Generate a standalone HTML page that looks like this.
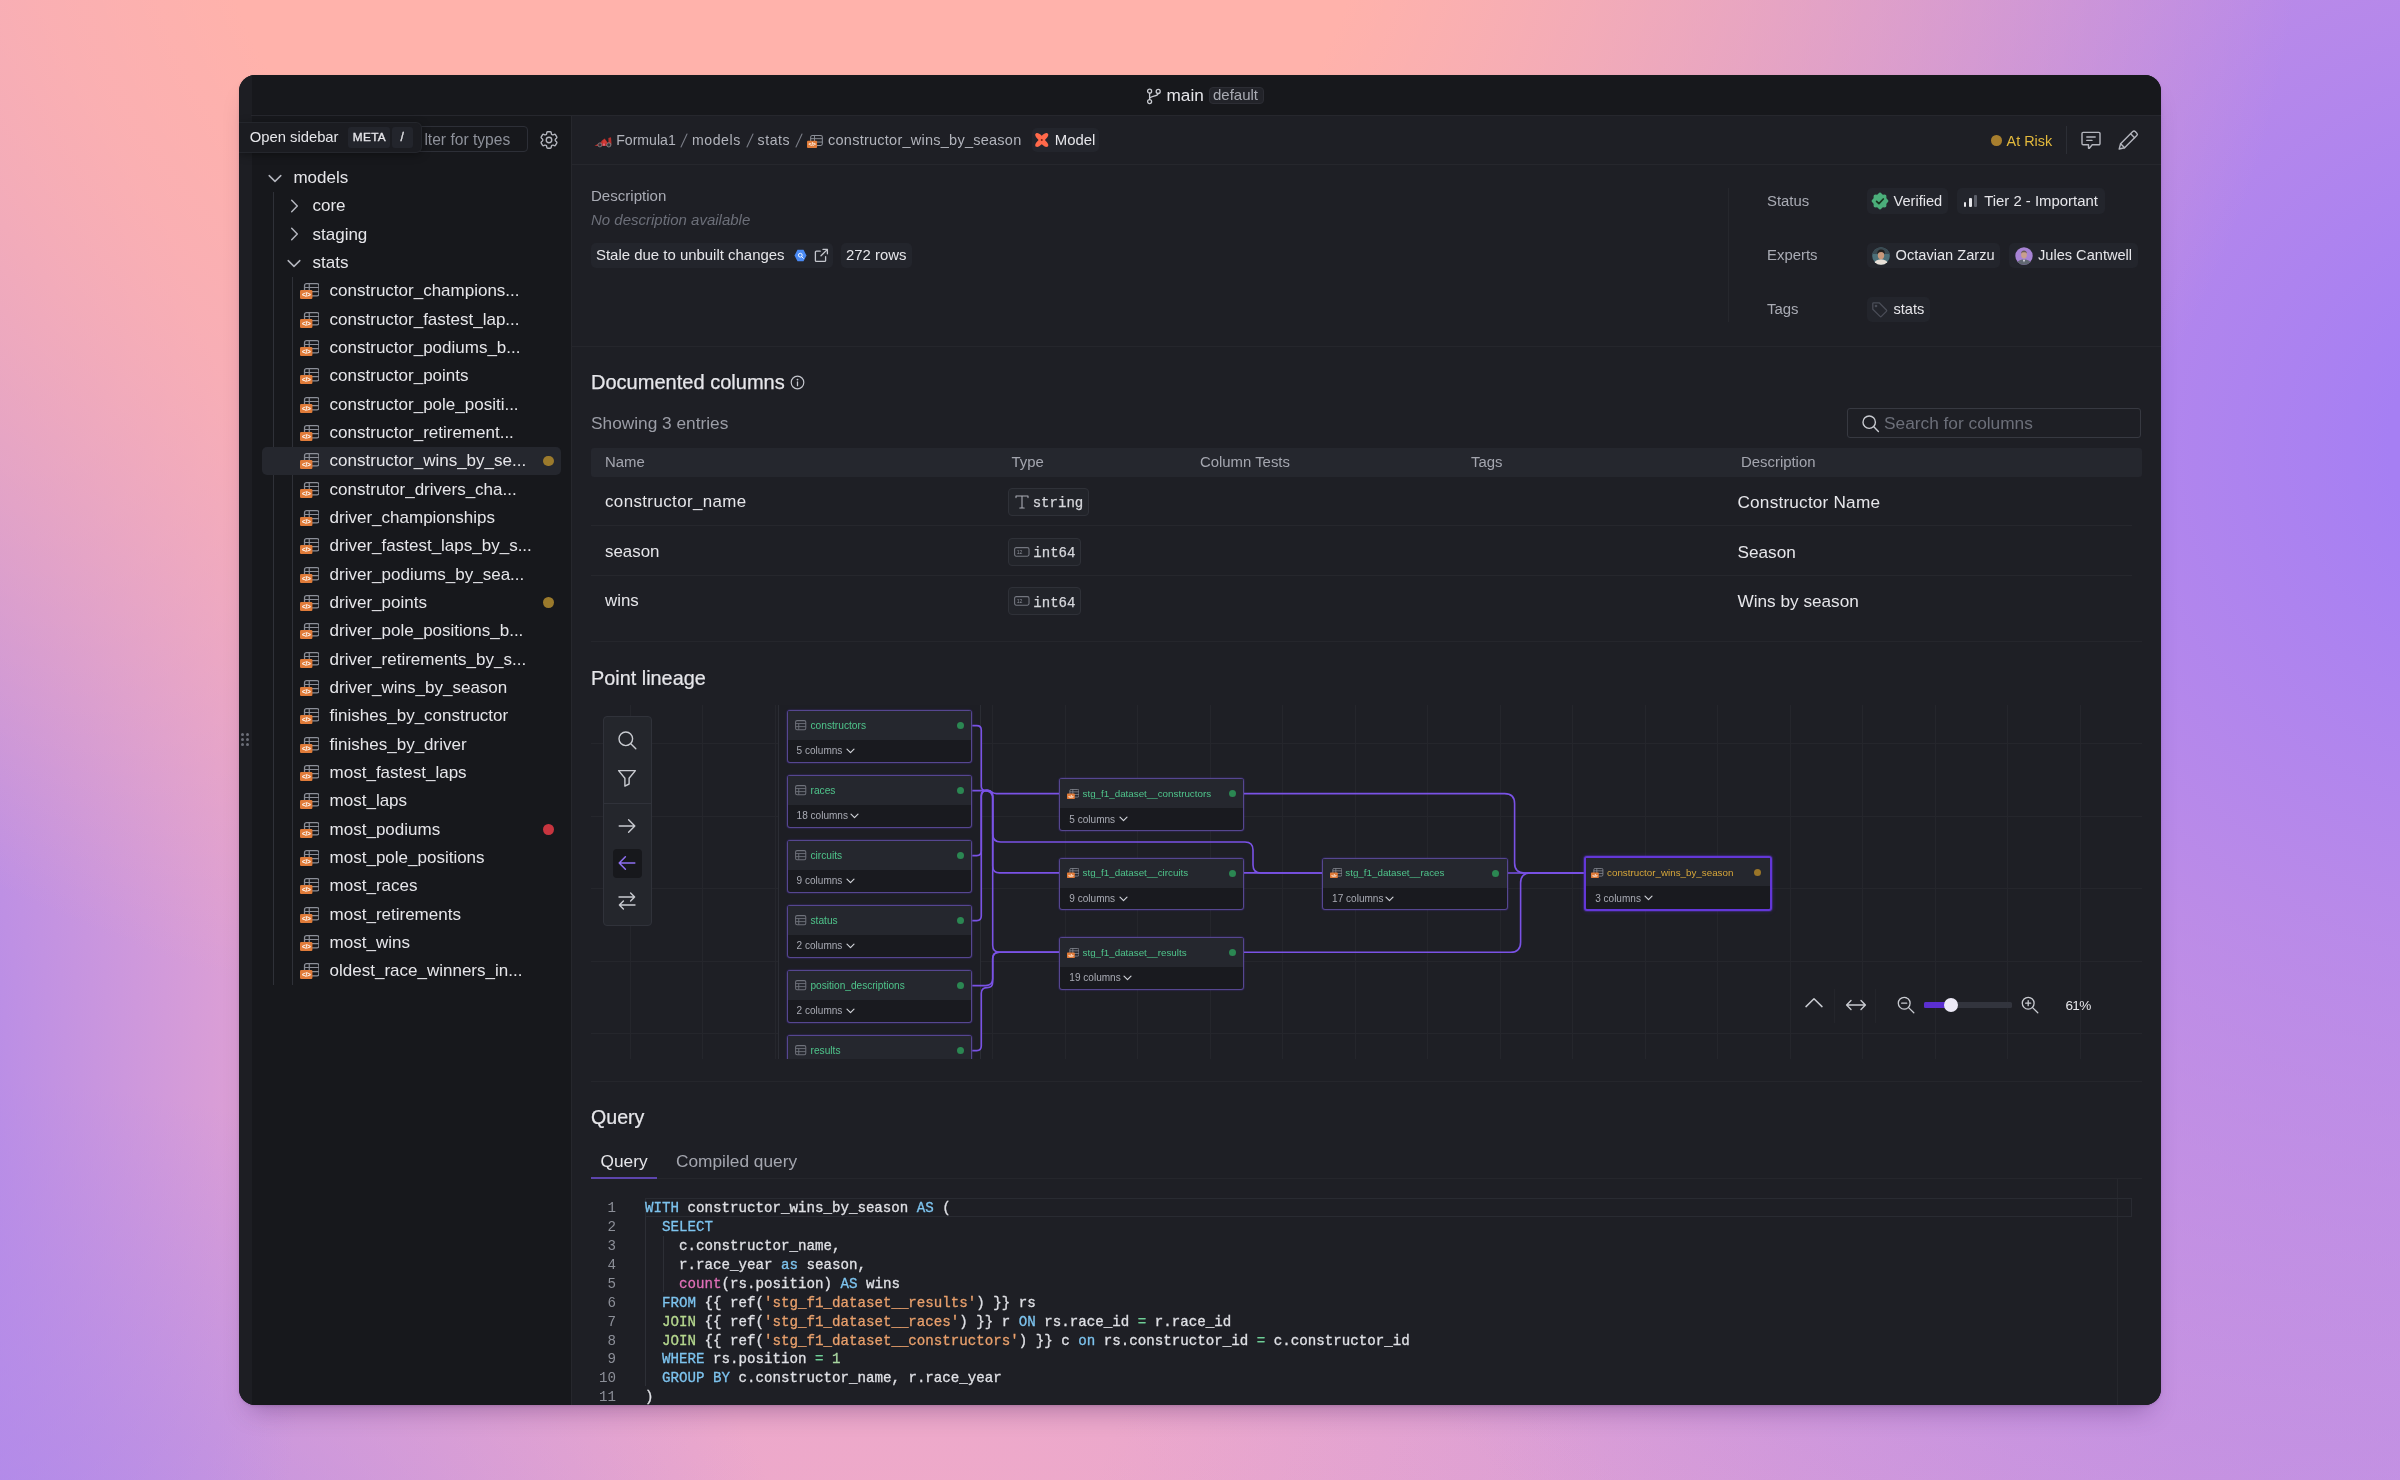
<!DOCTYPE html>
<html lang="en"><head><meta charset="utf-8"><title>constructor_wins_by_season</title><style>
*{margin:0;padding:0}
html,body{width:2400px;height:1480px;overflow:hidden}
body{position:relative;font-family:'Liberation Sans', sans-serif;
background:
radial-gradient(ellipse 63% 80% at 33% -8%, #ffb2ab 0%, #ffb2ab 38%, rgba(255,178,171,0) 100%),
radial-gradient(ellipse 64% 95% at 106% 30%, #a67ff3 0%, #a67ff3 10%, rgba(166,127,243,0) 100%),
radial-gradient(ellipse 55% 45% at 100% 106%, rgba(176,137,236,.5) 0%, rgba(176,137,236,0) 100%),
radial-gradient(ellipse 18% 80% at -5% 75%, #aa86ee 0%, rgba(170,134,238,0) 100%),
radial-gradient(ellipse 35% 35% at -2% 108%, #b48ce8 0%, rgba(180,140,232,0) 100%),
radial-gradient(ellipse 30% 36% at 38% 106%, rgba(242,172,198,.8) 0%, rgba(242,172,198,0) 100%),
#e6a4d0;}
.win{position:absolute;left:239px;top:75px;width:1922px;height:1330px;border-radius:16px;overflow:hidden;background:#1e1f25;box-shadow:0 16px 26px -12px rgba(50,15,80,.35),0 1px 3px rgba(30,10,50,.12)}
.o{position:absolute;left:-239px;top:-75px;width:2400px;height:1480px;will-change:transform}
.r{position:absolute;display:block}
.t{position:absolute;white-space:nowrap}
</style></head>
<body>
<div class="win"><div class="o">
<div class="r" style="left:239.00px;top:75.00px;width:1922.00px;height:1330.00px;background:#1e1f25;"></div>
<div class="r" style="left:239.00px;top:75.00px;width:1922.00px;height:40.00px;background:#17181c;"></div>
<div class="r" style="left:252.00px;top:115.00px;width:319.50px;height:1290.00px;background:#17181c;"></div>
<div class="r" style="left:239.00px;top:75.00px;width:13.00px;height:1330.00px;background:#1d1e23;"></div>
<div class="r" style="left:251.00px;top:115.00px;width:1910.00px;height:1.00px;background:#26272d;"></div>
<div class="r" style="left:570.90px;top:116.00px;width:1.00px;height:1289.00px;background:#26272d;"></div>
<div class="r" style="left:571.00px;top:163.50px;width:1590.00px;height:1.00px;background:#26272d;"></div>
<div class="r" style="left:240.90px;top:732.90px;width:3.00px;height:3.00px;background:#6c6f78;border-radius:50%;"></div>
<div class="r" style="left:240.90px;top:738.10px;width:3.00px;height:3.00px;background:#6c6f78;border-radius:50%;"></div>
<div class="r" style="left:240.90px;top:743.30px;width:3.00px;height:3.00px;background:#6c6f78;border-radius:50%;"></div>
<div class="r" style="left:246.20px;top:732.90px;width:3.00px;height:3.00px;background:#6c6f78;border-radius:50%;"></div>
<div class="r" style="left:246.20px;top:738.10px;width:3.00px;height:3.00px;background:#6c6f78;border-radius:50%;"></div>
<div class="r" style="left:246.20px;top:743.30px;width:3.00px;height:3.00px;background:#6c6f78;border-radius:50%;"></div>
<svg class="r" style="left:1146.00px;top:87.50px;" width="16" height="17" viewBox="0 0 16 17" fill="none"><g stroke="#c9cbd1" stroke-width="1.3"><circle cx="3.6" cy="3.2" r="2"/><circle cx="3.6" cy="13.6" r="2"/><circle cx="12.2" cy="3.4" r="2"/><path d="M3.6 5.2v6.4M12.2 5.4c0 3.4-8.6 2-8.6 5.4" stroke-linecap="round"/></g></svg>
<div class="t " style="left:1166.50px;top:83.60px;font-size:17.2px;line-height:22px;color:#e6e6ea;">main</div>
<div class="r" style="left:1209.00px;top:86.50px;width:54.50px;height:17.50px;background:#222329;border-radius:4px;border:1px solid #2c2d34;box-sizing:border-box;"></div>
<div class="t " style="left:1213.00px;top:85.20px;font-size:15px;line-height:20px;color:#a9abb3;">default</div>
<div class="r" style="left:380.00px;top:126.30px;width:147.80px;height:26.20px;border:1px solid #2d2f37;border-radius:4px;box-sizing:border-box;"></div>
<div class="t " style="left:424.40px;top:130.40px;font-size:15.6px;line-height:20px;color:#8e919a;">lter for types</div>
<div class="r" style="left:239.00px;top:121.60px;width:182.80px;height:31.60px;background:#1b1c21;border:1px solid #24262c;border-left:none;border-radius:0 6px 6px 0;box-sizing:border-box;box-shadow:0 2px 8px rgba(0,0,0,.35);"></div>
<div class="t " style="left:249.70px;top:127.90px;font-size:14.8px;line-height:19px;color:#e6e6ea;">Open sidebar</div>
<div class="r" style="left:347.60px;top:127.00px;width:42.10px;height:21.00px;background:#23252c;border-radius:3px;"></div>
<div class="r" style="left:391.80px;top:127.00px;width:21.20px;height:21.00px;background:#23252c;border-radius:3px;"></div>
<div class="t " style="left:352.80px;top:130.30px;font-size:11.8px;line-height:15px;color:#e6e6ea;letter-spacing:0.35px;-webkit-text-stroke:.35px;">META</div>
<div class="t " style="left:400.60px;top:129.30px;font-size:12px;line-height:16px;color:#e6e6ea;-webkit-text-stroke:.3px;">/</div>
<svg class="r" style="left:538.40px;top:128.50px;" width="22" height="22" viewBox="0 0 24 24" fill="none"><path d="M9.594 3.94c.09-.542.56-.94 1.11-.94h2.593c.55 0 1.02.398 1.11.94l.213 1.281c.063.374.313.686.645.87.074.04.147.083.22.127.325.196.72.257 1.075.124l1.217-.456a1.125 1.125 0 0 1 1.37.49l1.296 2.247a1.125 1.125 0 0 1-.26 1.431l-1.003.827c-.293.241-.438.613-.43.992a7.723 7.723 0 0 1 0 .255c-.008.378.137.75.43.991l1.004.827c.424.35.534.955.26 1.43l-1.298 2.247a1.125 1.125 0 0 1-1.369.491l-1.217-.456c-.355-.133-.75-.072-1.076.124a6.47 6.47 0 0 1-.22.128c-.331.183-.581.495-.644.869l-.213 1.281c-.09.543-.56.94-1.11.94h-2.594c-.55 0-1.019-.398-1.11-.94l-.213-1.281c-.062-.374-.312-.686-.644-.87a6.52 6.52 0 0 1-.22-.127c-.325-.196-.72-.257-1.076-.124l-1.217.456a1.125 1.125 0 0 1-1.369-.49l-1.297-2.247a1.125 1.125 0 0 1 .26-1.431l1.004-.827c.292-.24.437-.613.43-.991a6.932 6.932 0 0 1 0-.255c.007-.38-.138-.751-.43-.992l-1.004-.827a1.125 1.125 0 0 1-.26-1.43l1.297-2.247a1.125 1.125 0 0 1 1.37-.491l1.216.456c.356.133.751.072 1.076-.124.072-.044.146-.086.22-.128.332-.183.582-.495.644-.869l.214-1.28Z" stroke="#b4b6be" stroke-width="1.5"/><circle cx="12" cy="12" r="3" stroke="#b4b6be" stroke-width="1.5"/></svg>
<div class="r" style="left:273.00px;top:192.00px;width:1.00px;height:793.00px;background:#2f3138;"></div>
<div class="r" style="left:292.00px;top:277.00px;width:1.00px;height:708.00px;background:#2f3138;"></div>
<div class="r" style="left:261.60px;top:446.83px;width:299.70px;height:28.00px;background:#25272e;border-radius:5px;"></div>
<svg class="r" style="left:267.70px;top:173.50px;" width="14" height="9" viewBox="0 0 14 9" fill="none"><path d="M1.2 1.6 7 7.4l5.8-5.8" stroke="#b4b6be" stroke-width="1.5" stroke-linecap="round" stroke-linejoin="round"/></svg>
<div class="t " style="left:293.40px;top:167.10px;font-size:17px;line-height:22px;color:#e6e6ea;">models</div>
<svg class="r" style="left:289.70px;top:198.83px;" width="9" height="14" viewBox="0 0 9 14" fill="none"><path d="M1.7 1.2 7.3 7l-5.6 5.8" stroke="#b4b6be" stroke-width="1.5" stroke-linecap="round" stroke-linejoin="round"/></svg>
<div class="t " style="left:312.50px;top:195.43px;font-size:17px;line-height:22px;color:#e6e6ea;">core</div>
<svg class="r" style="left:289.70px;top:227.17px;" width="9" height="14" viewBox="0 0 9 14" fill="none"><path d="M1.7 1.2 7.3 7l-5.6 5.8" stroke="#b4b6be" stroke-width="1.5" stroke-linecap="round" stroke-linejoin="round"/></svg>
<div class="t " style="left:312.50px;top:223.77px;font-size:17px;line-height:22px;color:#e6e6ea;">staging</div>
<svg class="r" style="left:286.60px;top:258.50px;" width="14" height="9" viewBox="0 0 14 9" fill="none"><path d="M1.2 1.6 7 7.4l5.8-5.8" stroke="#b4b6be" stroke-width="1.5" stroke-linecap="round" stroke-linejoin="round"/></svg>
<div class="t " style="left:312.50px;top:252.10px;font-size:17px;line-height:22px;color:#e6e6ea;">stats</div>
<svg class="r" style="left:299.80px;top:283.43px;" width="19.7" height="16.15" viewBox="0 0 20 16.4" fill="none"><rect x="4.6" y="0.7" width="14.6" height="12.4" rx="2" stroke="#8c8f98" stroke-width="1.3"/><path d="M4.6 4.6h14.6M4.6 8.8h14.6M9.4 0.7v12.4" stroke="#8c8f98" stroke-width="1.2"/><rect x="0" y="7.2" width="12.6" height="9" rx="1.2" fill="#e07b39"/><text x="6.3" y="14" font-family="'Liberation Sans', sans-serif" font-size="6.6" font-weight="700" fill="#fff" text-anchor="middle" letter-spacing="-0.3">&lt;/&gt;</text></svg>
<div class="t " style="left:329.60px;top:280.43px;font-size:17px;line-height:22px;color:#e6e6ea;">constructor_champions...</div>
<svg class="r" style="left:299.80px;top:311.76px;" width="19.7" height="16.15" viewBox="0 0 20 16.4" fill="none"><rect x="4.6" y="0.7" width="14.6" height="12.4" rx="2" stroke="#8c8f98" stroke-width="1.3"/><path d="M4.6 4.6h14.6M4.6 8.8h14.6M9.4 0.7v12.4" stroke="#8c8f98" stroke-width="1.2"/><rect x="0" y="7.2" width="12.6" height="9" rx="1.2" fill="#e07b39"/><text x="6.3" y="14" font-family="'Liberation Sans', sans-serif" font-size="6.6" font-weight="700" fill="#fff" text-anchor="middle" letter-spacing="-0.3">&lt;/&gt;</text></svg>
<div class="t " style="left:329.60px;top:308.76px;font-size:17px;line-height:22px;color:#e6e6ea;">constructor_fastest_lap...</div>
<svg class="r" style="left:299.80px;top:340.10px;" width="19.7" height="16.15" viewBox="0 0 20 16.4" fill="none"><rect x="4.6" y="0.7" width="14.6" height="12.4" rx="2" stroke="#8c8f98" stroke-width="1.3"/><path d="M4.6 4.6h14.6M4.6 8.8h14.6M9.4 0.7v12.4" stroke="#8c8f98" stroke-width="1.2"/><rect x="0" y="7.2" width="12.6" height="9" rx="1.2" fill="#e07b39"/><text x="6.3" y="14" font-family="'Liberation Sans', sans-serif" font-size="6.6" font-weight="700" fill="#fff" text-anchor="middle" letter-spacing="-0.3">&lt;/&gt;</text></svg>
<div class="t " style="left:329.60px;top:337.10px;font-size:17px;line-height:22px;color:#e6e6ea;">constructor_podiums_b...</div>
<svg class="r" style="left:299.80px;top:368.43px;" width="19.7" height="16.15" viewBox="0 0 20 16.4" fill="none"><rect x="4.6" y="0.7" width="14.6" height="12.4" rx="2" stroke="#8c8f98" stroke-width="1.3"/><path d="M4.6 4.6h14.6M4.6 8.8h14.6M9.4 0.7v12.4" stroke="#8c8f98" stroke-width="1.2"/><rect x="0" y="7.2" width="12.6" height="9" rx="1.2" fill="#e07b39"/><text x="6.3" y="14" font-family="'Liberation Sans', sans-serif" font-size="6.6" font-weight="700" fill="#fff" text-anchor="middle" letter-spacing="-0.3">&lt;/&gt;</text></svg>
<div class="t " style="left:329.60px;top:365.43px;font-size:17px;line-height:22px;color:#e6e6ea;">constructor_points</div>
<svg class="r" style="left:299.80px;top:396.76px;" width="19.7" height="16.15" viewBox="0 0 20 16.4" fill="none"><rect x="4.6" y="0.7" width="14.6" height="12.4" rx="2" stroke="#8c8f98" stroke-width="1.3"/><path d="M4.6 4.6h14.6M4.6 8.8h14.6M9.4 0.7v12.4" stroke="#8c8f98" stroke-width="1.2"/><rect x="0" y="7.2" width="12.6" height="9" rx="1.2" fill="#e07b39"/><text x="6.3" y="14" font-family="'Liberation Sans', sans-serif" font-size="6.6" font-weight="700" fill="#fff" text-anchor="middle" letter-spacing="-0.3">&lt;/&gt;</text></svg>
<div class="t " style="left:329.60px;top:393.76px;font-size:17px;line-height:22px;color:#e6e6ea;">constructor_pole_positi...</div>
<svg class="r" style="left:299.80px;top:425.10px;" width="19.7" height="16.15" viewBox="0 0 20 16.4" fill="none"><rect x="4.6" y="0.7" width="14.6" height="12.4" rx="2" stroke="#8c8f98" stroke-width="1.3"/><path d="M4.6 4.6h14.6M4.6 8.8h14.6M9.4 0.7v12.4" stroke="#8c8f98" stroke-width="1.2"/><rect x="0" y="7.2" width="12.6" height="9" rx="1.2" fill="#e07b39"/><text x="6.3" y="14" font-family="'Liberation Sans', sans-serif" font-size="6.6" font-weight="700" fill="#fff" text-anchor="middle" letter-spacing="-0.3">&lt;/&gt;</text></svg>
<div class="t " style="left:329.60px;top:422.10px;font-size:17px;line-height:22px;color:#e6e6ea;">constructor_retirement...</div>
<svg class="r" style="left:299.80px;top:453.43px;" width="19.7" height="16.15" viewBox="0 0 20 16.4" fill="none"><rect x="4.6" y="0.7" width="14.6" height="12.4" rx="2" stroke="#8c8f98" stroke-width="1.3"/><path d="M4.6 4.6h14.6M4.6 8.8h14.6M9.4 0.7v12.4" stroke="#8c8f98" stroke-width="1.2"/><rect x="0" y="7.2" width="12.6" height="9" rx="1.2" fill="#e07b39"/><text x="6.3" y="14" font-family="'Liberation Sans', sans-serif" font-size="6.6" font-weight="700" fill="#fff" text-anchor="middle" letter-spacing="-0.3">&lt;/&gt;</text></svg>
<div class="t " style="left:329.60px;top:450.43px;font-size:17px;line-height:22px;color:#e6e6ea;">constructor_wins_by_se...</div>
<div class="r" style="left:542.80px;top:455.63px;width:10.80px;height:10.80px;background:#9b7a2c;border-radius:50%;"></div>
<svg class="r" style="left:299.80px;top:481.76px;" width="19.7" height="16.15" viewBox="0 0 20 16.4" fill="none"><rect x="4.6" y="0.7" width="14.6" height="12.4" rx="2" stroke="#8c8f98" stroke-width="1.3"/><path d="M4.6 4.6h14.6M4.6 8.8h14.6M9.4 0.7v12.4" stroke="#8c8f98" stroke-width="1.2"/><rect x="0" y="7.2" width="12.6" height="9" rx="1.2" fill="#e07b39"/><text x="6.3" y="14" font-family="'Liberation Sans', sans-serif" font-size="6.6" font-weight="700" fill="#fff" text-anchor="middle" letter-spacing="-0.3">&lt;/&gt;</text></svg>
<div class="t " style="left:329.60px;top:478.76px;font-size:17px;line-height:22px;color:#e6e6ea;">construtor_drivers_cha...</div>
<svg class="r" style="left:299.80px;top:510.10px;" width="19.7" height="16.15" viewBox="0 0 20 16.4" fill="none"><rect x="4.6" y="0.7" width="14.6" height="12.4" rx="2" stroke="#8c8f98" stroke-width="1.3"/><path d="M4.6 4.6h14.6M4.6 8.8h14.6M9.4 0.7v12.4" stroke="#8c8f98" stroke-width="1.2"/><rect x="0" y="7.2" width="12.6" height="9" rx="1.2" fill="#e07b39"/><text x="6.3" y="14" font-family="'Liberation Sans', sans-serif" font-size="6.6" font-weight="700" fill="#fff" text-anchor="middle" letter-spacing="-0.3">&lt;/&gt;</text></svg>
<div class="t " style="left:329.60px;top:507.10px;font-size:17px;line-height:22px;color:#e6e6ea;">driver_championships</div>
<svg class="r" style="left:299.80px;top:538.43px;" width="19.7" height="16.15" viewBox="0 0 20 16.4" fill="none"><rect x="4.6" y="0.7" width="14.6" height="12.4" rx="2" stroke="#8c8f98" stroke-width="1.3"/><path d="M4.6 4.6h14.6M4.6 8.8h14.6M9.4 0.7v12.4" stroke="#8c8f98" stroke-width="1.2"/><rect x="0" y="7.2" width="12.6" height="9" rx="1.2" fill="#e07b39"/><text x="6.3" y="14" font-family="'Liberation Sans', sans-serif" font-size="6.6" font-weight="700" fill="#fff" text-anchor="middle" letter-spacing="-0.3">&lt;/&gt;</text></svg>
<div class="t " style="left:329.60px;top:535.43px;font-size:17px;line-height:22px;color:#e6e6ea;">driver_fastest_laps_by_s...</div>
<svg class="r" style="left:299.80px;top:566.76px;" width="19.7" height="16.15" viewBox="0 0 20 16.4" fill="none"><rect x="4.6" y="0.7" width="14.6" height="12.4" rx="2" stroke="#8c8f98" stroke-width="1.3"/><path d="M4.6 4.6h14.6M4.6 8.8h14.6M9.4 0.7v12.4" stroke="#8c8f98" stroke-width="1.2"/><rect x="0" y="7.2" width="12.6" height="9" rx="1.2" fill="#e07b39"/><text x="6.3" y="14" font-family="'Liberation Sans', sans-serif" font-size="6.6" font-weight="700" fill="#fff" text-anchor="middle" letter-spacing="-0.3">&lt;/&gt;</text></svg>
<div class="t " style="left:329.60px;top:563.76px;font-size:17px;line-height:22px;color:#e6e6ea;">driver_podiums_by_sea...</div>
<svg class="r" style="left:299.80px;top:595.10px;" width="19.7" height="16.15" viewBox="0 0 20 16.4" fill="none"><rect x="4.6" y="0.7" width="14.6" height="12.4" rx="2" stroke="#8c8f98" stroke-width="1.3"/><path d="M4.6 4.6h14.6M4.6 8.8h14.6M9.4 0.7v12.4" stroke="#8c8f98" stroke-width="1.2"/><rect x="0" y="7.2" width="12.6" height="9" rx="1.2" fill="#e07b39"/><text x="6.3" y="14" font-family="'Liberation Sans', sans-serif" font-size="6.6" font-weight="700" fill="#fff" text-anchor="middle" letter-spacing="-0.3">&lt;/&gt;</text></svg>
<div class="t " style="left:329.60px;top:592.10px;font-size:17px;line-height:22px;color:#e6e6ea;">driver_points</div>
<div class="r" style="left:542.80px;top:597.30px;width:10.80px;height:10.80px;background:#9b7a2c;border-radius:50%;"></div>
<svg class="r" style="left:299.80px;top:623.43px;" width="19.7" height="16.15" viewBox="0 0 20 16.4" fill="none"><rect x="4.6" y="0.7" width="14.6" height="12.4" rx="2" stroke="#8c8f98" stroke-width="1.3"/><path d="M4.6 4.6h14.6M4.6 8.8h14.6M9.4 0.7v12.4" stroke="#8c8f98" stroke-width="1.2"/><rect x="0" y="7.2" width="12.6" height="9" rx="1.2" fill="#e07b39"/><text x="6.3" y="14" font-family="'Liberation Sans', sans-serif" font-size="6.6" font-weight="700" fill="#fff" text-anchor="middle" letter-spacing="-0.3">&lt;/&gt;</text></svg>
<div class="t " style="left:329.60px;top:620.43px;font-size:17px;line-height:22px;color:#e6e6ea;">driver_pole_positions_b...</div>
<svg class="r" style="left:299.80px;top:651.76px;" width="19.7" height="16.15" viewBox="0 0 20 16.4" fill="none"><rect x="4.6" y="0.7" width="14.6" height="12.4" rx="2" stroke="#8c8f98" stroke-width="1.3"/><path d="M4.6 4.6h14.6M4.6 8.8h14.6M9.4 0.7v12.4" stroke="#8c8f98" stroke-width="1.2"/><rect x="0" y="7.2" width="12.6" height="9" rx="1.2" fill="#e07b39"/><text x="6.3" y="14" font-family="'Liberation Sans', sans-serif" font-size="6.6" font-weight="700" fill="#fff" text-anchor="middle" letter-spacing="-0.3">&lt;/&gt;</text></svg>
<div class="t " style="left:329.60px;top:648.76px;font-size:17px;line-height:22px;color:#e6e6ea;">driver_retirements_by_s...</div>
<svg class="r" style="left:299.80px;top:680.09px;" width="19.7" height="16.15" viewBox="0 0 20 16.4" fill="none"><rect x="4.6" y="0.7" width="14.6" height="12.4" rx="2" stroke="#8c8f98" stroke-width="1.3"/><path d="M4.6 4.6h14.6M4.6 8.8h14.6M9.4 0.7v12.4" stroke="#8c8f98" stroke-width="1.2"/><rect x="0" y="7.2" width="12.6" height="9" rx="1.2" fill="#e07b39"/><text x="6.3" y="14" font-family="'Liberation Sans', sans-serif" font-size="6.6" font-weight="700" fill="#fff" text-anchor="middle" letter-spacing="-0.3">&lt;/&gt;</text></svg>
<div class="t " style="left:329.60px;top:677.09px;font-size:17px;line-height:22px;color:#e6e6ea;">driver_wins_by_season</div>
<svg class="r" style="left:299.80px;top:708.43px;" width="19.7" height="16.15" viewBox="0 0 20 16.4" fill="none"><rect x="4.6" y="0.7" width="14.6" height="12.4" rx="2" stroke="#8c8f98" stroke-width="1.3"/><path d="M4.6 4.6h14.6M4.6 8.8h14.6M9.4 0.7v12.4" stroke="#8c8f98" stroke-width="1.2"/><rect x="0" y="7.2" width="12.6" height="9" rx="1.2" fill="#e07b39"/><text x="6.3" y="14" font-family="'Liberation Sans', sans-serif" font-size="6.6" font-weight="700" fill="#fff" text-anchor="middle" letter-spacing="-0.3">&lt;/&gt;</text></svg>
<div class="t " style="left:329.60px;top:705.43px;font-size:17px;line-height:22px;color:#e6e6ea;">finishes_by_constructor</div>
<svg class="r" style="left:299.80px;top:736.76px;" width="19.7" height="16.15" viewBox="0 0 20 16.4" fill="none"><rect x="4.6" y="0.7" width="14.6" height="12.4" rx="2" stroke="#8c8f98" stroke-width="1.3"/><path d="M4.6 4.6h14.6M4.6 8.8h14.6M9.4 0.7v12.4" stroke="#8c8f98" stroke-width="1.2"/><rect x="0" y="7.2" width="12.6" height="9" rx="1.2" fill="#e07b39"/><text x="6.3" y="14" font-family="'Liberation Sans', sans-serif" font-size="6.6" font-weight="700" fill="#fff" text-anchor="middle" letter-spacing="-0.3">&lt;/&gt;</text></svg>
<div class="t " style="left:329.60px;top:733.76px;font-size:17px;line-height:22px;color:#e6e6ea;">finishes_by_driver</div>
<svg class="r" style="left:299.80px;top:765.09px;" width="19.7" height="16.15" viewBox="0 0 20 16.4" fill="none"><rect x="4.6" y="0.7" width="14.6" height="12.4" rx="2" stroke="#8c8f98" stroke-width="1.3"/><path d="M4.6 4.6h14.6M4.6 8.8h14.6M9.4 0.7v12.4" stroke="#8c8f98" stroke-width="1.2"/><rect x="0" y="7.2" width="12.6" height="9" rx="1.2" fill="#e07b39"/><text x="6.3" y="14" font-family="'Liberation Sans', sans-serif" font-size="6.6" font-weight="700" fill="#fff" text-anchor="middle" letter-spacing="-0.3">&lt;/&gt;</text></svg>
<div class="t " style="left:329.60px;top:762.09px;font-size:17px;line-height:22px;color:#e6e6ea;">most_fastest_laps</div>
<svg class="r" style="left:299.80px;top:793.43px;" width="19.7" height="16.15" viewBox="0 0 20 16.4" fill="none"><rect x="4.6" y="0.7" width="14.6" height="12.4" rx="2" stroke="#8c8f98" stroke-width="1.3"/><path d="M4.6 4.6h14.6M4.6 8.8h14.6M9.4 0.7v12.4" stroke="#8c8f98" stroke-width="1.2"/><rect x="0" y="7.2" width="12.6" height="9" rx="1.2" fill="#e07b39"/><text x="6.3" y="14" font-family="'Liberation Sans', sans-serif" font-size="6.6" font-weight="700" fill="#fff" text-anchor="middle" letter-spacing="-0.3">&lt;/&gt;</text></svg>
<div class="t " style="left:329.60px;top:790.43px;font-size:17px;line-height:22px;color:#e6e6ea;">most_laps</div>
<svg class="r" style="left:299.80px;top:821.76px;" width="19.7" height="16.15" viewBox="0 0 20 16.4" fill="none"><rect x="4.6" y="0.7" width="14.6" height="12.4" rx="2" stroke="#8c8f98" stroke-width="1.3"/><path d="M4.6 4.6h14.6M4.6 8.8h14.6M9.4 0.7v12.4" stroke="#8c8f98" stroke-width="1.2"/><rect x="0" y="7.2" width="12.6" height="9" rx="1.2" fill="#e07b39"/><text x="6.3" y="14" font-family="'Liberation Sans', sans-serif" font-size="6.6" font-weight="700" fill="#fff" text-anchor="middle" letter-spacing="-0.3">&lt;/&gt;</text></svg>
<div class="t " style="left:329.60px;top:818.76px;font-size:17px;line-height:22px;color:#e6e6ea;">most_podiums</div>
<div class="r" style="left:542.80px;top:823.96px;width:10.80px;height:10.80px;background:#c8353f;border-radius:50%;"></div>
<svg class="r" style="left:299.80px;top:850.09px;" width="19.7" height="16.15" viewBox="0 0 20 16.4" fill="none"><rect x="4.6" y="0.7" width="14.6" height="12.4" rx="2" stroke="#8c8f98" stroke-width="1.3"/><path d="M4.6 4.6h14.6M4.6 8.8h14.6M9.4 0.7v12.4" stroke="#8c8f98" stroke-width="1.2"/><rect x="0" y="7.2" width="12.6" height="9" rx="1.2" fill="#e07b39"/><text x="6.3" y="14" font-family="'Liberation Sans', sans-serif" font-size="6.6" font-weight="700" fill="#fff" text-anchor="middle" letter-spacing="-0.3">&lt;/&gt;</text></svg>
<div class="t " style="left:329.60px;top:847.09px;font-size:17px;line-height:22px;color:#e6e6ea;">most_pole_positions</div>
<svg class="r" style="left:299.80px;top:878.42px;" width="19.7" height="16.15" viewBox="0 0 20 16.4" fill="none"><rect x="4.6" y="0.7" width="14.6" height="12.4" rx="2" stroke="#8c8f98" stroke-width="1.3"/><path d="M4.6 4.6h14.6M4.6 8.8h14.6M9.4 0.7v12.4" stroke="#8c8f98" stroke-width="1.2"/><rect x="0" y="7.2" width="12.6" height="9" rx="1.2" fill="#e07b39"/><text x="6.3" y="14" font-family="'Liberation Sans', sans-serif" font-size="6.6" font-weight="700" fill="#fff" text-anchor="middle" letter-spacing="-0.3">&lt;/&gt;</text></svg>
<div class="t " style="left:329.60px;top:875.42px;font-size:17px;line-height:22px;color:#e6e6ea;">most_races</div>
<svg class="r" style="left:299.80px;top:906.76px;" width="19.7" height="16.15" viewBox="0 0 20 16.4" fill="none"><rect x="4.6" y="0.7" width="14.6" height="12.4" rx="2" stroke="#8c8f98" stroke-width="1.3"/><path d="M4.6 4.6h14.6M4.6 8.8h14.6M9.4 0.7v12.4" stroke="#8c8f98" stroke-width="1.2"/><rect x="0" y="7.2" width="12.6" height="9" rx="1.2" fill="#e07b39"/><text x="6.3" y="14" font-family="'Liberation Sans', sans-serif" font-size="6.6" font-weight="700" fill="#fff" text-anchor="middle" letter-spacing="-0.3">&lt;/&gt;</text></svg>
<div class="t " style="left:329.60px;top:903.76px;font-size:17px;line-height:22px;color:#e6e6ea;">most_retirements</div>
<svg class="r" style="left:299.80px;top:935.09px;" width="19.7" height="16.15" viewBox="0 0 20 16.4" fill="none"><rect x="4.6" y="0.7" width="14.6" height="12.4" rx="2" stroke="#8c8f98" stroke-width="1.3"/><path d="M4.6 4.6h14.6M4.6 8.8h14.6M9.4 0.7v12.4" stroke="#8c8f98" stroke-width="1.2"/><rect x="0" y="7.2" width="12.6" height="9" rx="1.2" fill="#e07b39"/><text x="6.3" y="14" font-family="'Liberation Sans', sans-serif" font-size="6.6" font-weight="700" fill="#fff" text-anchor="middle" letter-spacing="-0.3">&lt;/&gt;</text></svg>
<div class="t " style="left:329.60px;top:932.09px;font-size:17px;line-height:22px;color:#e6e6ea;">most_wins</div>
<svg class="r" style="left:299.80px;top:963.42px;" width="19.7" height="16.15" viewBox="0 0 20 16.4" fill="none"><rect x="4.6" y="0.7" width="14.6" height="12.4" rx="2" stroke="#8c8f98" stroke-width="1.3"/><path d="M4.6 4.6h14.6M4.6 8.8h14.6M9.4 0.7v12.4" stroke="#8c8f98" stroke-width="1.2"/><rect x="0" y="7.2" width="12.6" height="9" rx="1.2" fill="#e07b39"/><text x="6.3" y="14" font-family="'Liberation Sans', sans-serif" font-size="6.6" font-weight="700" fill="#fff" text-anchor="middle" letter-spacing="-0.3">&lt;/&gt;</text></svg>
<div class="t " style="left:329.60px;top:960.42px;font-size:17px;line-height:22px;color:#e6e6ea;">oldest_race_winners_in...</div>
<svg class="r" style="left:593.50px;top:135.50px;" width="18" height="12" viewBox="0 0 18 12" fill="none"><path d="M.5 9.900 2.800 8.400 5.800 7.400 8 4.600 10.600 2.500 12.400 4.800 13.400 6.400 14.500 6.400 14.400 1.900 17 1.300 17.500 7.600 16.900 9.900z" fill="#b5302d"/><path d="M8.600 5 10.600 3.200 12 5.200 12.800 6.800 9 8.200z" fill="#d23a34"/><rect x="9" y="7.400" width="2" height="2.400" rx=".4" fill="#e26374"/><circle cx="5.900" cy="8.900" r="2" fill="#3b3236" stroke="#8b8286" stroke-width=".8"/><circle cx="14.800" cy="8.900" r="2.100" fill="#34363a" stroke="#8b8e92" stroke-width=".8"/></svg>
<div class="t " style="left:616.20px;top:130.50px;font-size:14.1px;line-height:18px;color:#b2b4bc;">Formula1</div>
<svg class="r" style="left:678.50px;top:131.50px;" width="10" height="17" viewBox="0 0 10 17" fill="none"><path d="M8 2 2 15" stroke="#7a7d86" stroke-width="1.1" stroke-linecap="round"/></svg>
<div class="t " style="left:692.00px;top:130.50px;font-size:14.1px;line-height:18px;color:#b2b4bc;letter-spacing:0.55px;">models</div>
<svg class="r" style="left:744.50px;top:131.50px;" width="10" height="17" viewBox="0 0 10 17" fill="none"><path d="M8 2 2 15" stroke="#7a7d86" stroke-width="1.1" stroke-linecap="round"/></svg>
<div class="t " style="left:757.50px;top:130.50px;font-size:14.1px;line-height:18px;color:#b2b4bc;letter-spacing:0.6px;">stats</div>
<svg class="r" style="left:793.50px;top:131.50px;" width="10" height="17" viewBox="0 0 10 17" fill="none"><path d="M8 2 2 15" stroke="#7a7d86" stroke-width="1.1" stroke-linecap="round"/></svg>
<svg class="r" style="left:806.60px;top:134.60px;" width="16.0" height="13.12" viewBox="0 0 20 16.4" fill="none"><rect x="4.6" y="0.7" width="14.6" height="12.4" rx="2" stroke="#8c8f98" stroke-width="1.3"/><path d="M4.6 4.6h14.6M4.6 8.8h14.6M9.4 0.7v12.4" stroke="#8c8f98" stroke-width="1.2"/><rect x="0" y="7.2" width="12.6" height="9" rx="1.2" fill="#e07b39"/><text x="6.3" y="14" font-family="'Liberation Sans', sans-serif" font-size="6.6" font-weight="700" fill="#fff" text-anchor="middle" letter-spacing="-0.3">&lt;/&gt;</text></svg>
<div class="t " style="left:828.00px;top:130.50px;font-size:14.5px;line-height:19px;color:#b2b4bc;letter-spacing:0.25px;">constructor_wins_by_season</div>
<div class="r" style="left:1031.60px;top:128.30px;width:67.90px;height:23.40px;background:#23252c;border-radius:5px;"></div>
<svg class="r" style="left:1034.00px;top:131.50px;" width="15.5" height="16" viewBox="0 0 15.6 16" fill="none"><path d="M2.2 1.2c1.6-.6 3.4.6 5.6 2.6 2.2-2 4-3.2 5.6-2.6 1 .4 1.2 1.4.8 2.6-.6 1.6-2 3-3.2 4.2 1.2 1.2 2.6 2.6 3.2 4.2.4 1.2.2 2.2-.8 2.6-1.6.6-3.4-.6-5.6-2.6-2.2 2-4 3.2-5.6 2.6-1-.4-1.2-1.4-.8-2.6.6-1.6 2-3 3.2-4.2C3.4 6.800 2 5.400 1.400 3.800 1 2.600 1.200 1.600 2.200 1.200z" fill="#ff694a"/><circle cx="7.8" cy="8" r="1" fill="#7a1e10"/></svg>
<div class="t " style="left:1054.80px;top:130.50px;font-size:14.9px;line-height:19px;color:#e6e6ea;">Model</div>
<div class="r" style="left:1991.00px;top:135.40px;width:10.60px;height:10.60px;background:#a77e2e;border-radius:50%;"></div>
<div class="t " style="left:2006.60px;top:132.00px;font-size:14.4px;line-height:19px;color:#e3b93c;">At Risk</div>
<div class="r" style="left:2065.50px;top:125.60px;width:1.00px;height:28.00px;background:#2c2e35;"></div>
<svg class="r" style="left:2079.50px;top:128.50px;" width="22" height="22" viewBox="0 0 22 22" fill="none"><path d="M3.2 3.4h15.6a1.2 1.2 0 0 1 1.2 1.2v10a1.200 1.200 0 0 1-1.200 1.200h-6.600l-2.800 3.400c-.3.360-.9.150-.9-.320v-3.080H3.200A1.200 1.200 0 0 1 2 14.600v-10a1.200 1.200 0 0 1 1.200-1.200z" stroke="#b4b6be" stroke-width="1.4" stroke-linejoin="round"/><path d="M6.800 8h8.400M6.800 11.400h5.200" stroke="#b4b6be" stroke-width="1.400" stroke-linecap="round"/></svg>
<svg class="r" style="left:2116.50px;top:128.50px;" width="23" height="22" viewBox="0 0 23 22" fill="none"><g stroke="#b4b6be" stroke-width="1.4" stroke-linejoin="round" stroke-linecap="round"><path d="M2.200 20l1.400-5.200L15.800 2.600a1.700 1.700 0 0 1 2.400 0l1.600 1.600a1.700 1.700 0 0 1 0 2.400L7.600 18.800z"/><path d="M13.600 4.800l4 4M3.600 14.800l4 4"/></g></svg>
<div class="t " style="left:591.00px;top:185.60px;font-size:15.05px;line-height:20px;color:#a9abb4;">Description</div>
<div class="t " style="left:591.00px;top:210.20px;font-size:15.0px;line-height:20px;color:#6c6f79;font-style:italic;">No description available</div>
<div class="r" style="left:591.00px;top:242.50px;width:241.50px;height:25.50px;background:#23252c;border-radius:5px;"></div>
<div class="t " style="left:596.00px;top:245.00px;font-size:14.95px;line-height:19px;color:#e6e6ea;">Stale due to unbuilt changes</div>
<svg class="r" style="left:793.50px;top:248.50px;" width="13" height="13" viewBox="0 0 13 13" fill="none"><path d="M3.500.800h6l3 5.700-3 5.700h-6l-3-5.700z" fill="#4a8af4"/><circle cx="6.300" cy="6.200" r="1.900" stroke="#fff" stroke-width=".9"/><path d="M7.700 7.700l1.600 1.600" stroke="#fff" stroke-width=".9" stroke-linecap="round"/></svg>
<svg class="r" style="left:813.50px;top:247.50px;" width="15" height="15" viewBox="0 0 15 15" fill="none"><g stroke="#c4c6cd" stroke-width="1.3" stroke-linecap="round" stroke-linejoin="round"><path d="M11.600 8.600v3.800a1 1 0 0 1-1 1H2.400a1 1 0 0 1-1-1V4.200a1 1 0 0 1 1-1h3.800"/><path d="M9 1.400h4.400v4.400M13.200 1.600 7 7.800"/></g></svg>
<div class="r" style="left:841.00px;top:242.50px;width:71.00px;height:25.50px;background:#23252c;border-radius:5px;"></div>
<div class="t " style="left:846.00px;top:246.00px;font-size:14.9px;line-height:19px;color:#e6e6ea;">272 rows</div>
<div class="r" style="left:1728.00px;top:188.00px;width:1.00px;height:134.00px;background:#26272d;"></div>
<div class="t " style="left:1767.00px;top:192.00px;font-size:14.9px;line-height:19px;color:#a9abb4;">Status</div>
<div class="t " style="left:1767.00px;top:246.20px;font-size:14.9px;line-height:19px;color:#a9abb4;">Experts</div>
<div class="t " style="left:1767.00px;top:300.40px;font-size:14.9px;line-height:19px;color:#a9abb4;">Tags</div>
<div class="r" style="left:1867.00px;top:188.20px;width:81.00px;height:25.60px;background:#23252c;border-radius:5px;"></div>
<div class="r" style="left:1957.40px;top:188.20px;width:147.60px;height:25.60px;background:#23252c;border-radius:5px;"></div>
<div class="r" style="left:1867.00px;top:242.60px;width:133.00px;height:25.60px;background:#23252c;border-radius:5px;"></div>
<div class="r" style="left:2009.00px;top:242.60px;width:129.00px;height:25.60px;background:#23252c;border-radius:5px;"></div>
<div class="r" style="left:1867.00px;top:296.80px;width:63.40px;height:25.60px;background:#23252c;border-radius:5px;"></div>
<svg class="r" style="left:1871.00px;top:192.00px;" width="18" height="18" viewBox="0 0 18 18" fill="none"><path d="M17.39,9.00 L17.20,9.72 L16.70,10.36 L16.10,10.90 L15.62,11.41 L15.39,11.98 L15.37,12.68 L15.41,13.49 L15.31,14.29 L14.93,14.93 L14.29,15.31 L13.49,15.41 L12.68,15.37 L11.98,15.39 L11.41,15.62 L10.90,16.10 L10.36,16.70 L9.72,17.20 L9.00,17.39 L8.28,17.20 L7.64,16.70 L7.10,16.10 L6.59,15.62 L6.02,15.39 L5.32,15.37 L4.51,15.41 L3.71,15.31 L3.07,14.93 L2.69,14.29 L2.59,13.49 L2.63,12.68 L2.61,11.98 L2.38,11.41 L1.90,10.90 L1.30,10.36 L0.80,9.72 L0.61,9.00 L0.80,8.28 L1.30,7.64 L1.90,7.10 L2.38,6.59 L2.61,6.02 L2.63,5.32 L2.59,4.51 L2.69,3.71 L3.07,3.07 L3.71,2.69 L4.51,2.59 L5.32,2.63 L6.02,2.61 L6.59,2.38 L7.10,1.90 L7.64,1.30 L8.28,0.80 L9.00,0.61 L9.72,0.80 L10.36,1.30 L10.90,1.90 L11.41,2.38 L11.98,2.61 L12.68,2.63 L13.49,2.59 L14.29,2.69 L14.93,3.07 L15.31,3.71 L15.41,4.51 L15.37,5.32 L15.39,6.02 L15.62,6.59 L16.10,7.10 L16.70,7.64 L17.20,8.28 L17.39,9.00Z" fill="#4bae7a"/><path d="M5.600 9.300l2.300 2.300 4.400-4.600" stroke="#17351f" stroke-width="1.700" stroke-linecap="round" stroke-linejoin="round"/></svg>
<div class="t " style="left:1893.50px;top:192.00px;font-size:14.6px;line-height:19px;color:#e6e6ea;">Verified</div>
<div class="r" style="left:1963.60px;top:201.60px;width:2.70px;height:5.40px;background:#e6e6ea;border-radius:1px;"></div>
<div class="r" style="left:1969.00px;top:198.20px;width:2.70px;height:8.80px;background:#e6e6ea;border-radius:1px;"></div>
<div class="r" style="left:1974.40px;top:195.00px;width:2.70px;height:12.00px;background:#5e616b;border-radius:1px;"></div>
<div class="t " style="left:1984.20px;top:192.00px;font-size:14.9px;line-height:19px;color:#e6e6ea;">Tier 2 - Important</div>
<svg class="r" style="left:1872.00px;top:246.50px;" width="18" height="18" viewBox="0 0 18 18" fill="none"><defs><clipPath id="av1"><circle cx="9" cy="9" r="8.800"/></clipPath></defs><g clip-path="url(#av1)"><rect width="18" height="18" fill="#4c6f78"/><rect x="0" y="0" width="18" height="7" fill="#3a4a52"/><ellipse cx="9" cy="17.500" rx="7.200" ry="5.200" fill="#e8e0d8"/><ellipse cx="9" cy="8.300" rx="3.200" ry="3.900" fill="#c9987a"/><path d="M5.300 7.600c-.300-3.600 1.500-5 3.800-5s4.200 1.200 3.700 5c-.500-1.700-1.500-2.600-3.700-2.600S5.800 6 5.300 7.600z" fill="#22201f"/></g></svg>
<div class="t " style="left:1895.60px;top:246.20px;font-size:14.6px;line-height:19px;color:#e6e6ea;">Octavian Zarzu</div>
<svg class="r" style="left:2014.50px;top:246.50px;" width="18" height="18" viewBox="0 0 18 18" fill="none"><defs><clipPath id="av2"><circle cx="9" cy="9" r="8.700"/></clipPath></defs><g clip-path="url(#av2)"><rect width="18" height="18" fill="#a783d4"/><path d="M1.500 18c.500-4 3.500-5.400 7.500-5.400s7 1.400 7.500 5.400z" fill="#5f6670"/><path d="M8 12.800l1 2.600 1-2.600z" fill="#e8e8ee"/><ellipse cx="9" cy="7.800" rx="2.900" ry="3.700" fill="#c99f8c"/><path d="M6.100 6.800c0-2.400 1.300-3.300 2.900-3.300s2.900.900 2.900 3.300c-.600-1.200-1.400-1.600-2.900-1.600s-2.300.400-2.900 1.600z" fill="#6a5a55"/></g></svg>
<div class="t " style="left:2038.00px;top:246.20px;font-size:14.6px;line-height:19px;color:#e6e6ea;">Jules Cantwell</div>
<svg class="r" style="left:1870.50px;top:301.00px;" width="17" height="17" viewBox="0 0 17 17" fill="none"><g stroke="#4a4d57" stroke-width="1.300" stroke-linejoin="round"><path d="M1.800 2.600a.8.8 0 0 1 .8-.8h5.600l7.200 7.200a1 1 0 0 1 0 1.400l-5 5a1 1 0 0 1-1.400 0L1.800 8.200z"/><circle cx="5" cy="5" r=".7" fill="#4a4d57"/></g></svg>
<div class="t " style="left:1893.50px;top:300.40px;font-size:14.6px;line-height:19px;color:#e6e6ea;">stats</div>
<div class="r" style="left:571.00px;top:345.50px;width:1590.00px;height:1.00px;background:#25262c;"></div>
<div class="t " style="left:591.00px;top:369.30px;font-size:20.05px;line-height:26px;color:#e6e6ea;-webkit-text-stroke:0.25px #e6e6ea;">Documented columns</div>
<svg class="r" style="left:789.50px;top:374.50px;" width="15" height="15" viewBox="0 0 15 15" fill="none"><circle cx="7.500" cy="7.500" r="6.300" stroke="#c4c6cd" stroke-width="1.200"/><path d="M7.500 6.900v3.800" stroke="#c4c6cd" stroke-width="1.300" stroke-linecap="round"/><circle cx="7.500" cy="4.600" r=".9" fill="#c4c6cd"/></svg>
<div class="t " style="left:591.00px;top:412.30px;font-size:17.3px;line-height:22px;color:#9b9da6;">Showing 3 entries</div>
<div class="r" style="left:1847.20px;top:408.00px;width:294.30px;height:30.00px;border:1px solid #373941;border-radius:3px;box-sizing:border-box;"></div>
<svg class="r" style="left:1860.50px;top:413.50px;" width="19" height="19" viewBox="0 0 19 19" fill="none"><circle cx="8.200" cy="8.200" r="6.200" stroke="#c9cbd1" stroke-width="1.400"/><path d="M12.800 12.800l4.600 4.600" stroke="#c9cbd1" stroke-width="1.400" stroke-linecap="round"/></svg>
<div class="t " style="left:1884.00px;top:412.20px;font-size:17.3px;line-height:22px;color:#6c6f79;">Search for columns</div>
<div class="r" style="left:591.00px;top:448.00px;width:1551.00px;height:29.00px;background:#25272e;border-radius:3px;"></div>
<div class="t " style="left:605.00px;top:453.30px;font-size:14.9px;line-height:19px;color:#a4a6af;">Name</div>
<div class="t " style="left:1011.60px;top:453.30px;font-size:14.9px;line-height:19px;color:#a4a6af;">Type</div>
<div class="t " style="left:1200.00px;top:453.30px;font-size:14.9px;line-height:19px;color:#a4a6af;">Column Tests</div>
<div class="t " style="left:1471.00px;top:453.30px;font-size:14.9px;line-height:19px;color:#a4a6af;">Tags</div>
<div class="t " style="left:1741.00px;top:453.30px;font-size:14.9px;line-height:19px;color:#a4a6af;">Description</div>
<div class="r" style="left:591.00px;top:525.30px;width:1541.00px;height:1.00px;background:#26272d;"></div>
<div class="r" style="left:591.00px;top:574.80px;width:1541.00px;height:1.00px;background:#26272d;"></div>
<div class="r" style="left:591.00px;top:641.20px;width:1551.00px;height:1.00px;background:#25262c;"></div>
<div class="t " style="left:605.00px;top:491.20px;font-size:16.9px;line-height:22px;color:#e6e6ea;letter-spacing:0.4px;">constructor_name</div>
<div class="t " style="left:1737.50px;top:491.20px;font-size:17.2px;line-height:22px;color:#e6e6ea;letter-spacing:0.2px;">Constructor Name</div>
<div class="t " style="left:605.00px;top:540.80px;font-size:16.9px;line-height:22px;color:#e6e6ea;letter-spacing:0px;">season</div>
<div class="t " style="left:1737.50px;top:540.80px;font-size:17.2px;line-height:22px;color:#e6e6ea;letter-spacing:0px;">Season</div>
<div class="t " style="left:605.00px;top:590.20px;font-size:16.9px;line-height:22px;color:#e6e6ea;letter-spacing:0px;">wins</div>
<div class="t " style="left:1737.50px;top:590.20px;font-size:17.2px;line-height:22px;color:#e6e6ea;letter-spacing:0px;">Wins by season</div>
<div class="r" style="left:1007.60px;top:488.00px;width:81.40px;height:28.00px;background:#22242a;border:1px solid #2f3138;border-radius:4px;box-sizing:border-box;"></div>
<div class="r" style="left:1007.60px;top:537.80px;width:73.00px;height:28.00px;background:#22242a;border:1px solid #2f3138;border-radius:4px;box-sizing:border-box;"></div>
<div class="r" style="left:1007.60px;top:587.20px;width:73.00px;height:28.00px;background:#22242a;border:1px solid #2f3138;border-radius:4px;box-sizing:border-box;"></div>
<svg class="r" style="left:1013.50px;top:494.00px;" width="16" height="16" viewBox="0 0 16 16" fill="none"><path d="M2 3.600V2h12v1.600M8 2v12M5.800 14h4.400" stroke="#a9abb4" stroke-width="1.100" stroke-linecap="round" stroke-linejoin="round"/></svg>
<div class="t " style="left:1032.70px;top:494.40px;font-size:14.05px;line-height:18px;color:#d6d7dc;font-family:'Liberation Mono', monospace;-webkit-text-stroke:.25px;">string</div>
<svg class="r" style="left:1013.50px;top:546.80px;" width="16" height="10" viewBox="0 0 16 10" fill="none"><rect x=".6" y=".6" width="14.400" height="8.600" rx="1.600" stroke="#73767f" stroke-width="1.100"/><text x="5.600" y="7" font-family="'Liberation Sans', sans-serif" font-size="5.200" fill="#8c8f98" text-anchor="middle">12</text></svg>
<div class="t " style="left:1033.30px;top:544.20px;font-size:14.05px;line-height:18px;color:#d6d7dc;font-family:'Liberation Mono', monospace;-webkit-text-stroke:.25px;">int64</div>
<svg class="r" style="left:1013.50px;top:596.20px;" width="16" height="10" viewBox="0 0 16 10" fill="none"><rect x=".6" y=".6" width="14.400" height="8.600" rx="1.600" stroke="#73767f" stroke-width="1.100"/><text x="5.600" y="7" font-family="'Liberation Sans', sans-serif" font-size="5.200" fill="#8c8f98" text-anchor="middle">12</text></svg>
<div class="t " style="left:1033.30px;top:593.60px;font-size:14.05px;line-height:18px;color:#d6d7dc;font-family:'Liberation Mono', monospace;-webkit-text-stroke:.25px;">int64</div>
<div class="t " style="left:591.00px;top:665.00px;font-size:19.85px;line-height:26px;color:#e6e6ea;-webkit-text-stroke:0.2px #e6e6ea;">Point lineage</div>
<div class="r" style="left:591px;top:704.5px;width:1551px;height:354.0px;overflow:hidden"><div class="r" style="left:-591px;top:-704.5px;width:2400px;height:1480px">
<div class="r" style="left:629.50px;top:704.50px;width:1.00px;height:354.00px;background:#25262c;"></div>
<div class="r" style="left:702.00px;top:704.50px;width:1.00px;height:354.00px;background:#25262c;"></div>
<div class="r" style="left:774.50px;top:704.50px;width:1.00px;height:354.00px;background:#25262c;"></div>
<div class="r" style="left:847.00px;top:704.50px;width:1.00px;height:354.00px;background:#25262c;"></div>
<div class="r" style="left:919.50px;top:704.50px;width:1.00px;height:354.00px;background:#25262c;"></div>
<div class="r" style="left:992.00px;top:704.50px;width:1.00px;height:354.00px;background:#25262c;"></div>
<div class="r" style="left:1064.50px;top:704.50px;width:1.00px;height:354.00px;background:#25262c;"></div>
<div class="r" style="left:1137.00px;top:704.50px;width:1.00px;height:354.00px;background:#25262c;"></div>
<div class="r" style="left:1209.50px;top:704.50px;width:1.00px;height:354.00px;background:#25262c;"></div>
<div class="r" style="left:1282.00px;top:704.50px;width:1.00px;height:354.00px;background:#25262c;"></div>
<div class="r" style="left:1354.50px;top:704.50px;width:1.00px;height:354.00px;background:#25262c;"></div>
<div class="r" style="left:1427.00px;top:704.50px;width:1.00px;height:354.00px;background:#25262c;"></div>
<div class="r" style="left:1499.50px;top:704.50px;width:1.00px;height:354.00px;background:#25262c;"></div>
<div class="r" style="left:1572.00px;top:704.50px;width:1.00px;height:354.00px;background:#25262c;"></div>
<div class="r" style="left:1644.50px;top:704.50px;width:1.00px;height:354.00px;background:#25262c;"></div>
<div class="r" style="left:1717.00px;top:704.50px;width:1.00px;height:354.00px;background:#25262c;"></div>
<div class="r" style="left:1789.50px;top:704.50px;width:1.00px;height:354.00px;background:#25262c;"></div>
<div class="r" style="left:1862.00px;top:704.50px;width:1.00px;height:354.00px;background:#25262c;"></div>
<div class="r" style="left:1934.50px;top:704.50px;width:1.00px;height:354.00px;background:#25262c;"></div>
<div class="r" style="left:2007.00px;top:704.50px;width:1.00px;height:354.00px;background:#25262c;"></div>
<div class="r" style="left:2079.50px;top:704.50px;width:1.00px;height:354.00px;background:#25262c;"></div>
<div class="r" style="left:591.00px;top:742.90px;width:1551.00px;height:1.00px;background:#25262c;"></div>
<div class="r" style="left:591.00px;top:815.50px;width:1551.00px;height:1.00px;background:#25262c;"></div>
<div class="r" style="left:591.00px;top:888.20px;width:1551.00px;height:1.00px;background:#25262c;"></div>
<div class="r" style="left:591.00px;top:960.80px;width:1551.00px;height:1.00px;background:#25262c;"></div>
<div class="r" style="left:591.00px;top:1033.40px;width:1551.00px;height:1.00px;background:#25262c;"></div>
<div class="r" style="left:777.60px;top:704.50px;width:203.70px;height:354.00px;background:#1d1e24;border-left:1px solid #2b2d34;border-right:1px solid #2b2d34;box-sizing:border-box;"></div>
<svg class="r" style="left:0;top:0" width="2400" height="1480" fill="none"><g stroke="#7a52e6" stroke-width="1.6"><path d="M972.30,725.60 L976.80,725.60 Q981.30,725.60 981.30,730.10 L981.30,786.20 Q981.30,790.40 985.50,790.40 L987.14,790.40 Q989.70,790.40 991.70,792.00 L991.70,792.00 Q993.70,793.60 996.26,793.60 L1059.25,793.60"/><path d="M972.30,790.60 L984.70,790.60 Q992.70,790.60 992.70,798.60 L992.70,834.00 Q992.70,842.00 1000.70,842.00 L1245.00,842.00 Q1253.00,842.00 1253.00,850.00 L1253.00,865.00 Q1253.00,873.00 1261.00,873.00 L1322.00,873.00"/><path d="M972.30,855.60 L976.80,855.60 Q981.30,855.60 981.30,851.10 L981.30,796.10 Q981.30,790.40 987.00,790.40 L987.00,790.40 Q992.70,790.40 992.70,796.10 L992.70,865.90 Q992.70,872.90 999.70,872.90 L1059.25,872.90"/><path d="M972.30,920.60 L976.80,920.60 Q981.30,920.60 981.30,916.10 L981.30,796.10 Q981.30,790.40 987.00,790.40 L987.00,790.40 Q992.70,790.40 992.70,796.10 L992.70,945.30 Q992.70,952.30 999.70,952.30 L1059.25,952.30"/><path d="M972.30,985.60 L985.70,985.60 Q992.70,985.60 992.70,978.60 L992.70,959.30 Q992.70,952.30 999.70,952.30 L1059.25,952.30"/><path d="M972.30,1050.60 L976.80,1050.60 Q981.30,1050.60 981.30,1046.10 L981.30,993.30 Q981.30,987.60 987.00,987.60 L987.00,987.60 Q992.70,987.60 992.70,981.90 L992.70,958.30 Q992.70,952.30 998.70,952.30 L1059.25,952.30"/><path d="M1243.75,793.60 L1504.60,793.60 Q1514.60,793.60 1514.60,803.60 L1514.60,863.00 Q1514.60,873.00 1524.60,873.00 L1583.75,873.00"/><path d="M1243.75,872.90 L1322.00,873.00"/><path d="M1243.75,952.30 L1510.60,952.30 Q1520.60,952.30 1520.60,942.30 L1520.60,883.00 Q1520.60,873.00 1530.60,873.00 L1583.75,873.00"/><path d="M1507.50,873.00 L1583.75,873.00"/></g></svg>
<div class="r" style="left:786.50px;top:710.10px;width:185.80px;height:52.70px;background:#191a1f;border:1px solid #564790;border-radius:3px;box-sizing:border-box;box-shadow:0 0 1.5px rgba(104,64,230,.75);"><div class="r" style="left:0;top:0;right:0;height:29.20px;background:#25272e;border-radius:1px 1px 0 0"></div></div>
<svg class="r" style="left:795.30px;top:720.40px;" width="11.4" height="10.4" viewBox="0 0 11.2 10.2" fill="none"><rect x=".6" y=".6" width="10" height="9" rx="1.400" stroke="#6f727b" stroke-width="1"/><path d="M.6 3.500h10M.6 6.500h10M3.700 3.500v6" stroke="#6f727b" stroke-width=".9"/></svg>
<div class="t " style="left:810.50px;top:718.80px;font-size:10.2px;line-height:13px;color:#4fc48b;">constructors</div>
<div class="r" style="left:957.10px;top:722.10px;width:7.00px;height:7.00px;background:#2b8752;border-radius:50%;"></div>
<div class="t " style="left:796.60px;top:744.40px;font-size:10.05px;line-height:13px;color:#a9abb4;">5 columns</div>
<svg class="r" style="left:845.80px;top:748.20px;" width="9" height="6" viewBox="0 0 9 6" fill="none"><path d="M1 1.200 4.500 4.700 8 1.200" stroke="#d0d2d8" stroke-width="1.200" stroke-linecap="round" stroke-linejoin="round"/></svg>
<div class="r" style="left:786.50px;top:775.10px;width:185.80px;height:52.70px;background:#191a1f;border:1px solid #564790;border-radius:3px;box-sizing:border-box;box-shadow:0 0 1.5px rgba(104,64,230,.75);"><div class="r" style="left:0;top:0;right:0;height:29.20px;background:#25272e;border-radius:1px 1px 0 0"></div></div>
<svg class="r" style="left:795.30px;top:785.40px;" width="11.4" height="10.4" viewBox="0 0 11.2 10.2" fill="none"><rect x=".6" y=".6" width="10" height="9" rx="1.400" stroke="#6f727b" stroke-width="1"/><path d="M.6 3.500h10M.6 6.500h10M3.700 3.500v6" stroke="#6f727b" stroke-width=".9"/></svg>
<div class="t " style="left:810.50px;top:783.80px;font-size:10.2px;line-height:13px;color:#4fc48b;">races</div>
<div class="r" style="left:957.10px;top:787.10px;width:7.00px;height:7.00px;background:#2b8752;border-radius:50%;"></div>
<div class="t " style="left:796.60px;top:809.40px;font-size:10.05px;line-height:13px;color:#a9abb4;">18 columns</div>
<svg class="r" style="left:850.40px;top:813.20px;" width="9" height="6" viewBox="0 0 9 6" fill="none"><path d="M1 1.200 4.500 4.700 8 1.200" stroke="#d0d2d8" stroke-width="1.200" stroke-linecap="round" stroke-linejoin="round"/></svg>
<div class="r" style="left:786.50px;top:840.10px;width:185.80px;height:52.70px;background:#191a1f;border:1px solid #564790;border-radius:3px;box-sizing:border-box;box-shadow:0 0 1.5px rgba(104,64,230,.75);"><div class="r" style="left:0;top:0;right:0;height:29.20px;background:#25272e;border-radius:1px 1px 0 0"></div></div>
<svg class="r" style="left:795.30px;top:850.40px;" width="11.4" height="10.4" viewBox="0 0 11.2 10.2" fill="none"><rect x=".6" y=".6" width="10" height="9" rx="1.400" stroke="#6f727b" stroke-width="1"/><path d="M.6 3.500h10M.6 6.500h10M3.700 3.500v6" stroke="#6f727b" stroke-width=".9"/></svg>
<div class="t " style="left:810.50px;top:848.80px;font-size:10.2px;line-height:13px;color:#4fc48b;">circuits</div>
<div class="r" style="left:957.10px;top:852.10px;width:7.00px;height:7.00px;background:#2b8752;border-radius:50%;"></div>
<div class="t " style="left:796.60px;top:874.40px;font-size:10.05px;line-height:13px;color:#a9abb4;">9 columns</div>
<svg class="r" style="left:845.80px;top:878.20px;" width="9" height="6" viewBox="0 0 9 6" fill="none"><path d="M1 1.200 4.500 4.700 8 1.200" stroke="#d0d2d8" stroke-width="1.200" stroke-linecap="round" stroke-linejoin="round"/></svg>
<div class="r" style="left:786.50px;top:905.10px;width:185.80px;height:52.70px;background:#191a1f;border:1px solid #564790;border-radius:3px;box-sizing:border-box;box-shadow:0 0 1.5px rgba(104,64,230,.75);"><div class="r" style="left:0;top:0;right:0;height:29.20px;background:#25272e;border-radius:1px 1px 0 0"></div></div>
<svg class="r" style="left:795.30px;top:915.40px;" width="11.4" height="10.4" viewBox="0 0 11.2 10.2" fill="none"><rect x=".6" y=".6" width="10" height="9" rx="1.400" stroke="#6f727b" stroke-width="1"/><path d="M.6 3.500h10M.6 6.500h10M3.700 3.500v6" stroke="#6f727b" stroke-width=".9"/></svg>
<div class="t " style="left:810.50px;top:913.80px;font-size:10.2px;line-height:13px;color:#4fc48b;">status</div>
<div class="r" style="left:957.10px;top:917.10px;width:7.00px;height:7.00px;background:#2b8752;border-radius:50%;"></div>
<div class="t " style="left:796.60px;top:939.40px;font-size:10.05px;line-height:13px;color:#a9abb4;">2 columns</div>
<svg class="r" style="left:845.80px;top:943.20px;" width="9" height="6" viewBox="0 0 9 6" fill="none"><path d="M1 1.200 4.500 4.700 8 1.200" stroke="#d0d2d8" stroke-width="1.200" stroke-linecap="round" stroke-linejoin="round"/></svg>
<div class="r" style="left:786.50px;top:970.10px;width:185.80px;height:52.70px;background:#191a1f;border:1px solid #564790;border-radius:3px;box-sizing:border-box;box-shadow:0 0 1.5px rgba(104,64,230,.75);"><div class="r" style="left:0;top:0;right:0;height:29.20px;background:#25272e;border-radius:1px 1px 0 0"></div></div>
<svg class="r" style="left:795.30px;top:980.40px;" width="11.4" height="10.4" viewBox="0 0 11.2 10.2" fill="none"><rect x=".6" y=".6" width="10" height="9" rx="1.400" stroke="#6f727b" stroke-width="1"/><path d="M.6 3.500h10M.6 6.500h10M3.700 3.500v6" stroke="#6f727b" stroke-width=".9"/></svg>
<div class="t " style="left:810.50px;top:978.80px;font-size:10.1px;line-height:13px;color:#4fc48b;">position_descriptions</div>
<div class="r" style="left:957.10px;top:982.10px;width:7.00px;height:7.00px;background:#2b8752;border-radius:50%;"></div>
<div class="t " style="left:796.60px;top:1004.40px;font-size:10.05px;line-height:13px;color:#a9abb4;">2 columns</div>
<svg class="r" style="left:845.80px;top:1008.20px;" width="9" height="6" viewBox="0 0 9 6" fill="none"><path d="M1 1.200 4.500 4.700 8 1.200" stroke="#d0d2d8" stroke-width="1.200" stroke-linecap="round" stroke-linejoin="round"/></svg>
<div class="r" style="left:786.50px;top:1035.10px;width:185.80px;height:52.70px;background:#191a1f;border:1px solid #564790;border-radius:3px;box-sizing:border-box;box-shadow:0 0 1.5px rgba(104,64,230,.75);"><div class="r" style="left:0;top:0;right:0;height:29.20px;background:#25272e;border-radius:1px 1px 0 0"></div></div>
<svg class="r" style="left:795.30px;top:1045.40px;" width="11.4" height="10.4" viewBox="0 0 11.2 10.2" fill="none"><rect x=".6" y=".6" width="10" height="9" rx="1.400" stroke="#6f727b" stroke-width="1"/><path d="M.6 3.500h10M.6 6.500h10M3.700 3.500v6" stroke="#6f727b" stroke-width=".9"/></svg>
<div class="t " style="left:810.50px;top:1043.80px;font-size:10.2px;line-height:13px;color:#4fc48b;">results</div>
<div class="r" style="left:957.10px;top:1047.10px;width:7.00px;height:7.00px;background:#2b8752;border-radius:50%;"></div>
<div class="t " style="left:796.60px;top:1069.40px;font-size:10.05px;line-height:13px;color:#a9abb4;">13 columns</div>
<svg class="r" style="left:850.40px;top:1073.20px;" width="9" height="6" viewBox="0 0 9 6" fill="none"><path d="M1 1.200 4.500 4.700 8 1.200" stroke="#d0d2d8" stroke-width="1.200" stroke-linecap="round" stroke-linejoin="round"/></svg>
<div class="r" style="left:1059.25px;top:778.25px;width:184.50px;height:52.70px;background:#191a1f;border:1px solid #564790;border-radius:3px;box-sizing:border-box;box-shadow:0 0 1.5px rgba(104,64,230,.75);"><div class="r" style="left:0;top:0;right:0;height:29.20px;background:#25272e;border-radius:1px 1px 0 0"></div></div>
<svg class="r" style="left:1066.85px;top:788.85px;" width="12.4" height="10.17" viewBox="0 0 20 16.4" fill="none"><rect x="4.6" y="0.7" width="14.6" height="12.4" rx="2" stroke="#8c8f98" stroke-width="1.3"/><path d="M4.6 4.6h14.6M4.6 8.8h14.6M9.4 0.7v12.4" stroke="#8c8f98" stroke-width="1.2"/><rect x="0" y="7.2" width="12.6" height="9" rx="1.2" fill="#e07b39"/><text x="6.3" y="14" font-family="'Liberation Sans', sans-serif" font-size="6.6" font-weight="700" fill="#fff" text-anchor="middle" letter-spacing="-0.3">&lt;/&gt;</text></svg>
<div class="t " style="left:1082.55px;top:786.95px;font-size:9.8px;line-height:13px;color:#4fc48b;">stg_f1_dataset__constructors</div>
<div class="r" style="left:1228.55px;top:790.25px;width:7.00px;height:7.00px;background:#2b8752;border-radius:50%;"></div>
<div class="t " style="left:1069.35px;top:812.55px;font-size:10.05px;line-height:13px;color:#a9abb4;">5 columns</div>
<svg class="r" style="left:1118.55px;top:816.35px;" width="9" height="6" viewBox="0 0 9 6" fill="none"><path d="M1 1.200 4.500 4.700 8 1.200" stroke="#d0d2d8" stroke-width="1.200" stroke-linecap="round" stroke-linejoin="round"/></svg>
<div class="r" style="left:1059.25px;top:857.50px;width:184.50px;height:52.70px;background:#191a1f;border:1px solid #564790;border-radius:3px;box-sizing:border-box;box-shadow:0 0 1.5px rgba(104,64,230,.75);"><div class="r" style="left:0;top:0;right:0;height:29.20px;background:#25272e;border-radius:1px 1px 0 0"></div></div>
<svg class="r" style="left:1066.85px;top:868.10px;" width="12.4" height="10.17" viewBox="0 0 20 16.4" fill="none"><rect x="4.6" y="0.7" width="14.6" height="12.4" rx="2" stroke="#8c8f98" stroke-width="1.3"/><path d="M4.6 4.6h14.6M4.6 8.8h14.6M9.4 0.7v12.4" stroke="#8c8f98" stroke-width="1.2"/><rect x="0" y="7.2" width="12.6" height="9" rx="1.2" fill="#e07b39"/><text x="6.3" y="14" font-family="'Liberation Sans', sans-serif" font-size="6.6" font-weight="700" fill="#fff" text-anchor="middle" letter-spacing="-0.3">&lt;/&gt;</text></svg>
<div class="t " style="left:1082.55px;top:866.20px;font-size:9.8px;line-height:13px;color:#4fc48b;">stg_f1_dataset__circuits</div>
<div class="r" style="left:1228.55px;top:869.50px;width:7.00px;height:7.00px;background:#2b8752;border-radius:50%;"></div>
<div class="t " style="left:1069.35px;top:891.80px;font-size:10.05px;line-height:13px;color:#a9abb4;">9 columns</div>
<svg class="r" style="left:1118.55px;top:895.60px;" width="9" height="6" viewBox="0 0 9 6" fill="none"><path d="M1 1.200 4.500 4.700 8 1.200" stroke="#d0d2d8" stroke-width="1.200" stroke-linecap="round" stroke-linejoin="round"/></svg>
<div class="r" style="left:1059.25px;top:937.00px;width:184.50px;height:52.70px;background:#191a1f;border:1px solid #564790;border-radius:3px;box-sizing:border-box;box-shadow:0 0 1.5px rgba(104,64,230,.75);"><div class="r" style="left:0;top:0;right:0;height:29.20px;background:#25272e;border-radius:1px 1px 0 0"></div></div>
<svg class="r" style="left:1066.85px;top:947.60px;" width="12.4" height="10.17" viewBox="0 0 20 16.4" fill="none"><rect x="4.6" y="0.7" width="14.6" height="12.4" rx="2" stroke="#8c8f98" stroke-width="1.3"/><path d="M4.6 4.6h14.6M4.6 8.8h14.6M9.4 0.7v12.4" stroke="#8c8f98" stroke-width="1.2"/><rect x="0" y="7.2" width="12.6" height="9" rx="1.2" fill="#e07b39"/><text x="6.3" y="14" font-family="'Liberation Sans', sans-serif" font-size="6.6" font-weight="700" fill="#fff" text-anchor="middle" letter-spacing="-0.3">&lt;/&gt;</text></svg>
<div class="t " style="left:1082.55px;top:945.70px;font-size:9.8px;line-height:13px;color:#4fc48b;">stg_f1_dataset__results</div>
<div class="r" style="left:1228.55px;top:949.00px;width:7.00px;height:7.00px;background:#2b8752;border-radius:50%;"></div>
<div class="t " style="left:1069.35px;top:971.30px;font-size:10.05px;line-height:13px;color:#a9abb4;">19 columns</div>
<svg class="r" style="left:1123.15px;top:975.10px;" width="9" height="6" viewBox="0 0 9 6" fill="none"><path d="M1 1.200 4.500 4.700 8 1.200" stroke="#d0d2d8" stroke-width="1.200" stroke-linecap="round" stroke-linejoin="round"/></svg>
<div class="r" style="left:1322.00px;top:857.50px;width:185.50px;height:52.20px;background:#191a1f;border:1px solid #564790;border-radius:3px;box-sizing:border-box;box-shadow:0 0 1.5px rgba(104,64,230,.75);"><div class="r" style="left:0;top:0;right:0;height:29.20px;background:#25272e;border-radius:1px 1px 0 0"></div></div>
<svg class="r" style="left:1329.60px;top:868.10px;" width="12.4" height="10.17" viewBox="0 0 20 16.4" fill="none"><rect x="4.6" y="0.7" width="14.6" height="12.4" rx="2" stroke="#8c8f98" stroke-width="1.3"/><path d="M4.6 4.6h14.6M4.6 8.8h14.6M9.4 0.7v12.4" stroke="#8c8f98" stroke-width="1.2"/><rect x="0" y="7.2" width="12.6" height="9" rx="1.2" fill="#e07b39"/><text x="6.3" y="14" font-family="'Liberation Sans', sans-serif" font-size="6.6" font-weight="700" fill="#fff" text-anchor="middle" letter-spacing="-0.3">&lt;/&gt;</text></svg>
<div class="t " style="left:1345.30px;top:866.20px;font-size:9.8px;line-height:13px;color:#4fc48b;">stg_f1_dataset__races</div>
<div class="r" style="left:1492.30px;top:869.50px;width:7.00px;height:7.00px;background:#2b8752;border-radius:50%;"></div>
<div class="t " style="left:1332.10px;top:891.80px;font-size:10.05px;line-height:13px;color:#a9abb4;">17 columns</div>
<svg class="r" style="left:1385.40px;top:895.60px;" width="9" height="6" viewBox="0 0 9 6" fill="none"><path d="M1 1.200 4.500 4.700 8 1.200" stroke="#d0d2d8" stroke-width="1.200" stroke-linecap="round" stroke-linejoin="round"/></svg>
<div class="r" style="left:1583.75px;top:855.75px;width:188.25px;height:55.50px;background:#191a1f;border:2px solid #6337d8;border-radius:3px;box-sizing:border-box;box-shadow:0 0 0 1px rgba(90,50,200,.3),0 0 5px rgba(90,50,200,.3);"><div class="r" style="left:0;top:0;right:0;height:28.20px;background:#25272e;border-radius:1px 1px 0 0"></div></div>
<svg class="r" style="left:1591.35px;top:868.05px;" width="12.4" height="10.17" viewBox="0 0 20 16.4" fill="none"><rect x="4.6" y="0.7" width="14.6" height="12.4" rx="2" stroke="#8c8f98" stroke-width="1.3"/><path d="M4.6 4.6h14.6M4.6 8.8h14.6M9.4 0.7v12.4" stroke="#8c8f98" stroke-width="1.2"/><rect x="0" y="7.2" width="12.6" height="9" rx="1.2" fill="#e07b39"/><text x="6.3" y="14" font-family="'Liberation Sans', sans-serif" font-size="6.6" font-weight="700" fill="#fff" text-anchor="middle" letter-spacing="-0.3">&lt;/&gt;</text></svg>
<div class="t " style="left:1607.05px;top:866.15px;font-size:9.8px;line-height:13px;color:#d7a73a;">constructor_wins_by_season</div>
<div class="r" style="left:1754.30px;top:869.45px;width:7.00px;height:7.00px;background:#9a7528;border-radius:50%;"></div>
<div class="t " style="left:1595.15px;top:891.65px;font-size:10.05px;line-height:13px;color:#a9abb4;">3 columns</div>
<svg class="r" style="left:1644.45px;top:895.45px;" width="9" height="6" viewBox="0 0 9 6" fill="none"><path d="M1 1.200 4.500 4.700 8 1.200" stroke="#d0d2d8" stroke-width="1.200" stroke-linecap="round" stroke-linejoin="round"/></svg>
<div class="r" style="left:603.00px;top:716.00px;width:48.60px;height:209.60px;background:#24262c;border:1px solid #30323a;border-radius:4px;box-sizing:border-box;"></div>
<div class="r" style="left:604.00px;top:803.00px;width:46.60px;height:1.00px;background:#30323a;"></div>
<div class="r" style="left:613.00px;top:849.00px;width:28.60px;height:28.60px;background:#17181c;border-radius:4px;"></div>
<svg class="r" style="left:616.00px;top:729.00px;" width="22" height="22" viewBox="0 0 22 22" fill="none"><circle cx="9.800" cy="9.800" r="6.800" stroke="#c9cbd1" stroke-width="1.400"/><path d="M14.800 14.800l5 5" stroke="#c9cbd1" stroke-width="1.400" stroke-linecap="round"/></svg>
<svg class="r" style="left:616.00px;top:767.00px;" width="22" height="22" viewBox="0 0 22 22" fill="none"><path d="M2.600 3.600h16.800l-6.300 7.600v5.800l-4.200 2.100v-7.900z" stroke="#c9cbd1" stroke-width="1.400" stroke-linejoin="round"/></svg>
<svg class="r" style="left:616.00px;top:814.60px;" width="22" height="22" viewBox="0 0 22 22" fill="none"><path d="M3.200 11h15.600M12.600 4.800l6.200 6.200-6.200 6.200" stroke="#c9cbd1" stroke-width="1.400" stroke-linecap="round" stroke-linejoin="round"/></svg>
<svg class="r" style="left:616.00px;top:852.30px;" width="22" height="22" viewBox="0 0 22 22" fill="none"><path d="M18.800 11H3.200M9.400 4.800 3.200 11l6.200 6.200" stroke="#8f6ff2" stroke-width="1.500" stroke-linecap="round" stroke-linejoin="round"/></svg>
<svg class="r" style="left:616.00px;top:890.00px;" width="22" height="22" viewBox="0 0 22 22" fill="none"><g stroke="#c9cbd1" stroke-width="1.400" stroke-linecap="round" stroke-linejoin="round"><path d="M3 7h15.600M14.600 3l4 4-4 4"/><path d="M19 15H3.400M7.400 11l-4 4 4 4"/></g></svg>
<svg class="r" style="left:1804.00px;top:996.00px;" width="20" height="14" viewBox="0 0 20 14" fill="none"><path d="M2 10.600 10 2.800l8 7.800" stroke="#c9cbd1" stroke-width="1.500" stroke-linecap="round" stroke-linejoin="round"/></svg>
<div class="r" style="left:1834.00px;top:988.50px;width:1.00px;height:34.00px;background:#24252b;"></div>
<div class="r" style="left:1875.00px;top:988.50px;width:1.00px;height:34.00px;background:#24252b;"></div>
<svg class="r" style="left:1844.50px;top:996.50px;" width="22" height="16" viewBox="0 0 22 16" fill="none"><path d="M1.800 8h18.400M6 3.600 1.600 8 6 12.400M16 3.600 20.400 8 16 12.400" stroke="#c9cbd1" stroke-width="1.400" stroke-linecap="round" stroke-linejoin="round"/></svg>
<svg class="r" style="left:1897.00px;top:996.30px;" width="18" height="18" viewBox="0 0 18 18" fill="none"><g stroke="#c9cbd1" stroke-width="1.300" stroke-linecap="round"><circle cx="7.200" cy="7.200" r="5.900"/><path d="M11.600 11.600l5.200 5.200M4.700 7.200h5"/></g></svg>
<div class="r" style="left:1923.80px;top:1002.00px;width:88.50px;height:6.00px;background:#32343d;border-radius:1.5px;"></div>
<div class="r" style="left:1923.80px;top:1002.00px;width:27.20px;height:6.00px;background:#5b2fd0;border-radius:1.5px;"></div>
<div class="r" style="left:1943.80px;top:998.00px;width:14.00px;height:14.00px;background:#ece9f6;border-radius:50%;"></div>
<svg class="r" style="left:2021.00px;top:996.30px;" width="18" height="18" viewBox="0 0 18 18" fill="none"><g stroke="#c9cbd1" stroke-width="1.300" stroke-linecap="round"><circle cx="7.200" cy="7.200" r="5.900"/><path d="M11.600 11.600l5.200 5.200M4.700 7.200h5"/><path d="M7.200 4.700v5" /></g></svg>
<div class="t " style="left:2065.50px;top:997.00px;font-size:13.6px;line-height:18px;color:#e6e6ea;letter-spacing:-0.7px;">61%</div>
</div></div>
<div class="r" style="left:591.00px;top:1080.50px;width:1551.00px;height:1.00px;background:#25262c;"></div>
<div class="t " style="left:591.00px;top:1105.00px;font-size:19.6px;line-height:25px;color:#e6e6ea;-webkit-text-stroke:0.2px #e6e6ea;">Query</div>
<div class="t " style="left:600.50px;top:1149.50px;font-size:17.3px;line-height:22px;color:#e6e6ea;">Query</div>
<div class="t " style="left:676.00px;top:1149.50px;font-size:17.3px;line-height:22px;color:#a4a6af;">Compiled query</div>
<div class="r" style="left:591.00px;top:1178.00px;width:1551.00px;height:1.00px;background:#25262c;"></div>
<div class="r" style="left:591.00px;top:1177.00px;width:66.00px;height:2.20px;background:#5d45ad;"></div>
<div class="r" style="left:2116.50px;top:1179.00px;width:1.00px;height:226.00px;background:#26272d;"></div>
<div class="r" style="left:645.00px;top:1197.50px;width:1487.00px;height:19.00px;border:1px solid #292b32;box-sizing:border-box;"></div>
<div class="r" style="left:645.00px;top:1216.50px;width:1.00px;height:169.50px;background:#2d2f36;"></div>
<div class="r" style="left:663.00px;top:1235.50px;width:1.00px;height:56.50px;background:#2d2f36;"></div>
<div class="t" style="left:576px;width:40px;text-align:right;top:1199.39px;font-family:'Liberation Mono', monospace;font-size:14.16px;line-height:18.875px;color:#8c8f98">1</div>
<div class="t" style="left:645px;top:1199.39px;font-family:'Liberation Mono', monospace;font-size:14.16px;line-height:18.875px;color:#dfe0e5;white-space:pre;-webkit-text-stroke:.3px"><span style="color:#7dc3ee">WITH</span> constructor_wins_by_season <span style="color:#7dc3ee">AS</span> (</div>
<div class="t" style="left:576px;width:40px;text-align:right;top:1218.26px;font-family:'Liberation Mono', monospace;font-size:14.16px;line-height:18.875px;color:#8c8f98">2</div>
<div class="t" style="left:645px;top:1218.26px;font-family:'Liberation Mono', monospace;font-size:14.16px;line-height:18.875px;color:#dfe0e5;white-space:pre;-webkit-text-stroke:.3px">  <span style="color:#7dc3ee">SELECT</span></div>
<div class="t" style="left:576px;width:40px;text-align:right;top:1237.14px;font-family:'Liberation Mono', monospace;font-size:14.16px;line-height:18.875px;color:#8c8f98">3</div>
<div class="t" style="left:645px;top:1237.14px;font-family:'Liberation Mono', monospace;font-size:14.16px;line-height:18.875px;color:#dfe0e5;white-space:pre;-webkit-text-stroke:.3px">    c.constructor_name,</div>
<div class="t" style="left:576px;width:40px;text-align:right;top:1256.01px;font-family:'Liberation Mono', monospace;font-size:14.16px;line-height:18.875px;color:#8c8f98">4</div>
<div class="t" style="left:645px;top:1256.01px;font-family:'Liberation Mono', monospace;font-size:14.16px;line-height:18.875px;color:#dfe0e5;white-space:pre;-webkit-text-stroke:.3px">    r.race_year <span style="color:#7dc3ee">as</span> season,</div>
<div class="t" style="left:576px;width:40px;text-align:right;top:1274.89px;font-family:'Liberation Mono', monospace;font-size:14.16px;line-height:18.875px;color:#8c8f98">5</div>
<div class="t" style="left:645px;top:1274.89px;font-family:'Liberation Mono', monospace;font-size:14.16px;line-height:18.875px;color:#dfe0e5;white-space:pre;-webkit-text-stroke:.3px">    <span style="color:#e070b8">count</span>(rs.position) <span style="color:#7dc3ee">AS</span> wins</div>
<div class="t" style="left:576px;width:40px;text-align:right;top:1293.76px;font-family:'Liberation Mono', monospace;font-size:14.16px;line-height:18.875px;color:#8c8f98">6</div>
<div class="t" style="left:645px;top:1293.76px;font-family:'Liberation Mono', monospace;font-size:14.16px;line-height:18.875px;color:#dfe0e5;white-space:pre;-webkit-text-stroke:.3px">  <span style="color:#7dc3ee">FROM</span> {{ ref(<span style="color:#e9a06c">'stg_f1_dataset__results'</span>) }} rs</div>
<div class="t" style="left:576px;width:40px;text-align:right;top:1312.64px;font-family:'Liberation Mono', monospace;font-size:14.16px;line-height:18.875px;color:#8c8f98">7</div>
<div class="t" style="left:645px;top:1312.64px;font-family:'Liberation Mono', monospace;font-size:14.16px;line-height:18.875px;color:#dfe0e5;white-space:pre;-webkit-text-stroke:.3px">  <span style="color:#b5d78e">JOIN</span> {{ ref(<span style="color:#e9a06c">'stg_f1_dataset__races'</span>) }} r <span style="color:#7dc3ee">ON</span> rs.race_id <span style="color:#6fcf97">=</span> r.race_id</div>
<div class="t" style="left:576px;width:40px;text-align:right;top:1331.51px;font-family:'Liberation Mono', monospace;font-size:14.16px;line-height:18.875px;color:#8c8f98">8</div>
<div class="t" style="left:645px;top:1331.51px;font-family:'Liberation Mono', monospace;font-size:14.16px;line-height:18.875px;color:#dfe0e5;white-space:pre;-webkit-text-stroke:.3px">  <span style="color:#b5d78e">JOIN</span> {{ ref(<span style="color:#e9a06c">'stg_f1_dataset__constructors'</span>) }} c <span style="color:#7dc3ee">on</span> rs.constructor_id <span style="color:#6fcf97">=</span> c.constructor_id</div>
<div class="t" style="left:576px;width:40px;text-align:right;top:1350.39px;font-family:'Liberation Mono', monospace;font-size:14.16px;line-height:18.875px;color:#8c8f98">9</div>
<div class="t" style="left:645px;top:1350.39px;font-family:'Liberation Mono', monospace;font-size:14.16px;line-height:18.875px;color:#dfe0e5;white-space:pre;-webkit-text-stroke:.3px">  <span style="color:#7dc3ee">WHERE</span> rs.position <span style="color:#6fcf97">=</span> <span style="color:#a9d6a0">1</span></div>
<div class="t" style="left:576px;width:40px;text-align:right;top:1369.26px;font-family:'Liberation Mono', monospace;font-size:14.16px;line-height:18.875px;color:#8c8f98">10</div>
<div class="t" style="left:645px;top:1369.26px;font-family:'Liberation Mono', monospace;font-size:14.16px;line-height:18.875px;color:#dfe0e5;white-space:pre;-webkit-text-stroke:.3px">  <span style="color:#7dc3ee">GROUP</span> <span style="color:#7dc3ee">BY</span> c.constructor_name, r.race_year</div>
<div class="t" style="left:576px;width:40px;text-align:right;top:1388.14px;font-family:'Liberation Mono', monospace;font-size:14.16px;line-height:18.875px;color:#8c8f98">11</div>
<div class="t" style="left:645px;top:1388.14px;font-family:'Liberation Mono', monospace;font-size:14.16px;line-height:18.875px;color:#dfe0e5;white-space:pre;-webkit-text-stroke:.3px">)</div>
</div></div>
</body></html>
